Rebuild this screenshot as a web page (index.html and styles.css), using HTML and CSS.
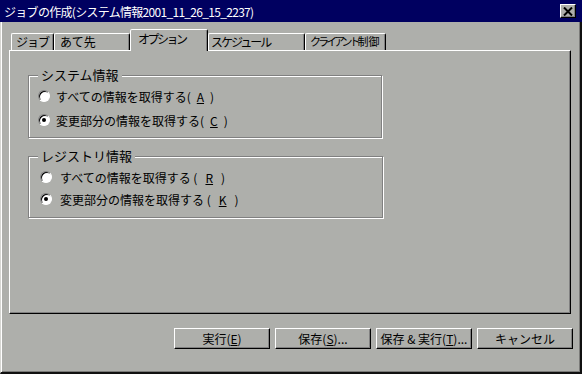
FILE: index.html
```html
<!DOCTYPE html>
<html lang="ja">

<head>
    <meta charset="UTF-8" />
    <title>ジョブの作成</title>
    <link rel="stylesheet" href="styles.css">
</head>

<body>
    <div class="window">
        <!-- タイトルバー -->
        <div class="titlebar">
            <span class="title">ジョブの作成(システム情報2001_11_26_15_2237)</span>
            <span class="close-btn">
                <svg width="10" height="9" viewBox="0 0 10 9">
                    <path d="M1 0.5 L9 8.5 M9 0.5 L1 8.5" stroke="#000" stroke-width="2" />
                </svg>
            </span>
        </div>

        <div class="client">
            <!-- タブ -->
            <div class="tabs">
                <div class="tab tab-job">ジョブ</div>
                <div class="tab tab-dest">あて先</div>
                <div class="tab tab-option active">オプション</div>
                <div class="tab tab-sched">スケジュール</div>
                <div class="tab tab-client"><span class="kana">クライアント</span>制御</div>
            </div>

            <div class="panel">
                <div class="group group-sys">
                    <span class="group-title">システム情報</span>
                    <label class="radio-row"><span class="radio"></span>すべての情報を取得する(<u>A</u>)</label>
                    <label class="radio-row"><span class="radio checked"></span>変更部分の情報を取得する(<u>C</u>)</label>
                </div>
                <div class="group group-reg">
                    <span class="group-title">レジストリ情報</span>
                    <label class="radio-row"><span class="radio"></span>すべての情報を取得する (<u>R</u>)</label>
                    <label class="radio-row"><span class="radio checked"></span>変更部分の情報を取得する (<u>K</u>)</label>
                </div>
            </div>

            <!-- ボタン -->
            <div class="buttons">
                <button class="btn">実行(<u>E</u>)</button>
                <button class="btn">保存(<u>S</u>)...</button>
                <button class="btn">保存 &amp; 実行(<u>T</u>)...</button>
                <button class="btn">キャンセル</button>
            </div>
        </div>
    </div>
</body>

</html>
```

FILE: styles.css
```css
* {
    margin: 0;
    padding: 0;
    box-sizing: border-box;
}

body {
    background: #aeafab;
}

.window {
    width: 582px;
    height: 374px;
    background: #aeafab;
    display: flex;
    flex-direction: column;
    font-family: "Noto Sans CJK JP", "Liberation Sans", sans-serif;
    font-size: 12px;
    color: #000;
}

.titlebar {
    height: 22px;
    background: #000060;
    color: #fff;
    display: flex;
    align-items: center;
    justify-content: space-between;
    padding: 0 6px 0 4px;
    font-size: 12px;
    letter-spacing: -0.7px;
}

.close-btn {
    width: 16px;
    height: 14px;
    background: #aeafab;
    border: 1px solid;
    border-color: #fff #000 #000 #fff;
    box-shadow: inset -1px -1px 0 #808080;
    display: flex;
    align-items: center;
    justify-content: center;
}

.client {
    flex: 1;
    border-left: 1px solid #d6d6d2;
    border-right: 2px solid #101010;
    border-bottom: 2px solid #101010;
    box-shadow: inset 1px 0 0 #fff, inset -1px -1px 0 #7a7a78;
    padding: 7px 9px 0 8px;
}

/* タブ */
.tabs {
    height: 21px;
    display: flex;
    align-items: flex-end;
    padding-left: 2px;
}

.tab {
    height: 17px;
    border: 1px solid;
    border-bottom: none;
    border-color: #fff #000 transparent #fff;
    border-radius: 2px 2px 0 0;
    box-shadow: inset -1px 0 0 #808080;
    padding-left: 4px;
    line-height: 15px;
    white-space: nowrap;
    overflow: hidden;
}

.tab-job {
    width: 43px;
    letter-spacing: -1px;
}

.tab-dest {
    width: 76px;
    padding-left: 5px;
}

.tab-sched {
    width: 97px;
    padding-left: 2px;
    letter-spacing: -2px;
}

.tab-client {
    width: 81px;
    font-size: 11px;
}

.tab-client .kana {
    letter-spacing: -3px;
}

.tab.active {
    width: 78px;
    height: 22px;
    margin-bottom: -1px;
    padding-left: 7px;
    line-height: 18px;
    letter-spacing: -2.5px;
    background: #aeafab;
    position: relative;
    z-index: 1;
}

.panel {
    height: 264px;
    border: 1px solid;
    border-color: #fff #000 #000 #fff;
    box-shadow: inset -1px -1px 0 #808080;
    padding: 24px 0 0 18px;
}

/* グループ枠 */
.group {
    position: relative;
    width: 354px;
    height: 63px;
    border: 1px solid #808080;
    box-shadow: 1px 1px 0 #fff, inset 1px 1px 0 #fff;
    display: flex;
    flex-direction: column;
    padding: 12px 0 0 9px;
    gap: 8px;
}

.group-reg {
    width: 355px;
    height: 62px;
    margin-top: 18px;
    padding-left: 11px;
    gap: 6px;
}

.group-title {
    position: absolute;
    top: -9px;
    left: 9px;
    padding: 0 3px;
    background: #aeafab;
    font-size: 13px;
    line-height: 16px;
}

.radio-row {
    height: 16px;
    display: flex;
    align-items: center;
    gap: 6px;
    font-size: 12px;
}

.group-reg .radio-row {
    gap: 8px;
}

.radio {
    width: 12px;
    height: 12px;
    border-radius: 50%;
    background: #fff;
    border: 1px solid;
    border-color: #808080 #fff #fff #808080;
    box-shadow: inset 1px 1px 0 #000;
    display: flex;
    align-items: center;
    justify-content: center;
}

.radio.checked::after {
    content: "";
    width: 4px;
    height: 4px;
    border-radius: 50%;
    background: #000;
}

/* ボタン */
.buttons {
    margin-top: 14px;
    margin-right: -2px;
    display: flex;
    justify-content: flex-end;
    gap: 5px;
}

.btn {
    width: 96px;
    height: 21px;
    background: #aeafab;
    border: 1px solid;
    border-color: #fff #000 #000 #fff;
    box-shadow: inset -1px -1px 0 #808080;
    font-family: "Noto Sans CJK JP", "Liberation Sans", sans-serif;
    font-size: 12px;
    line-height: 17px;
    color: #000;
}
```
